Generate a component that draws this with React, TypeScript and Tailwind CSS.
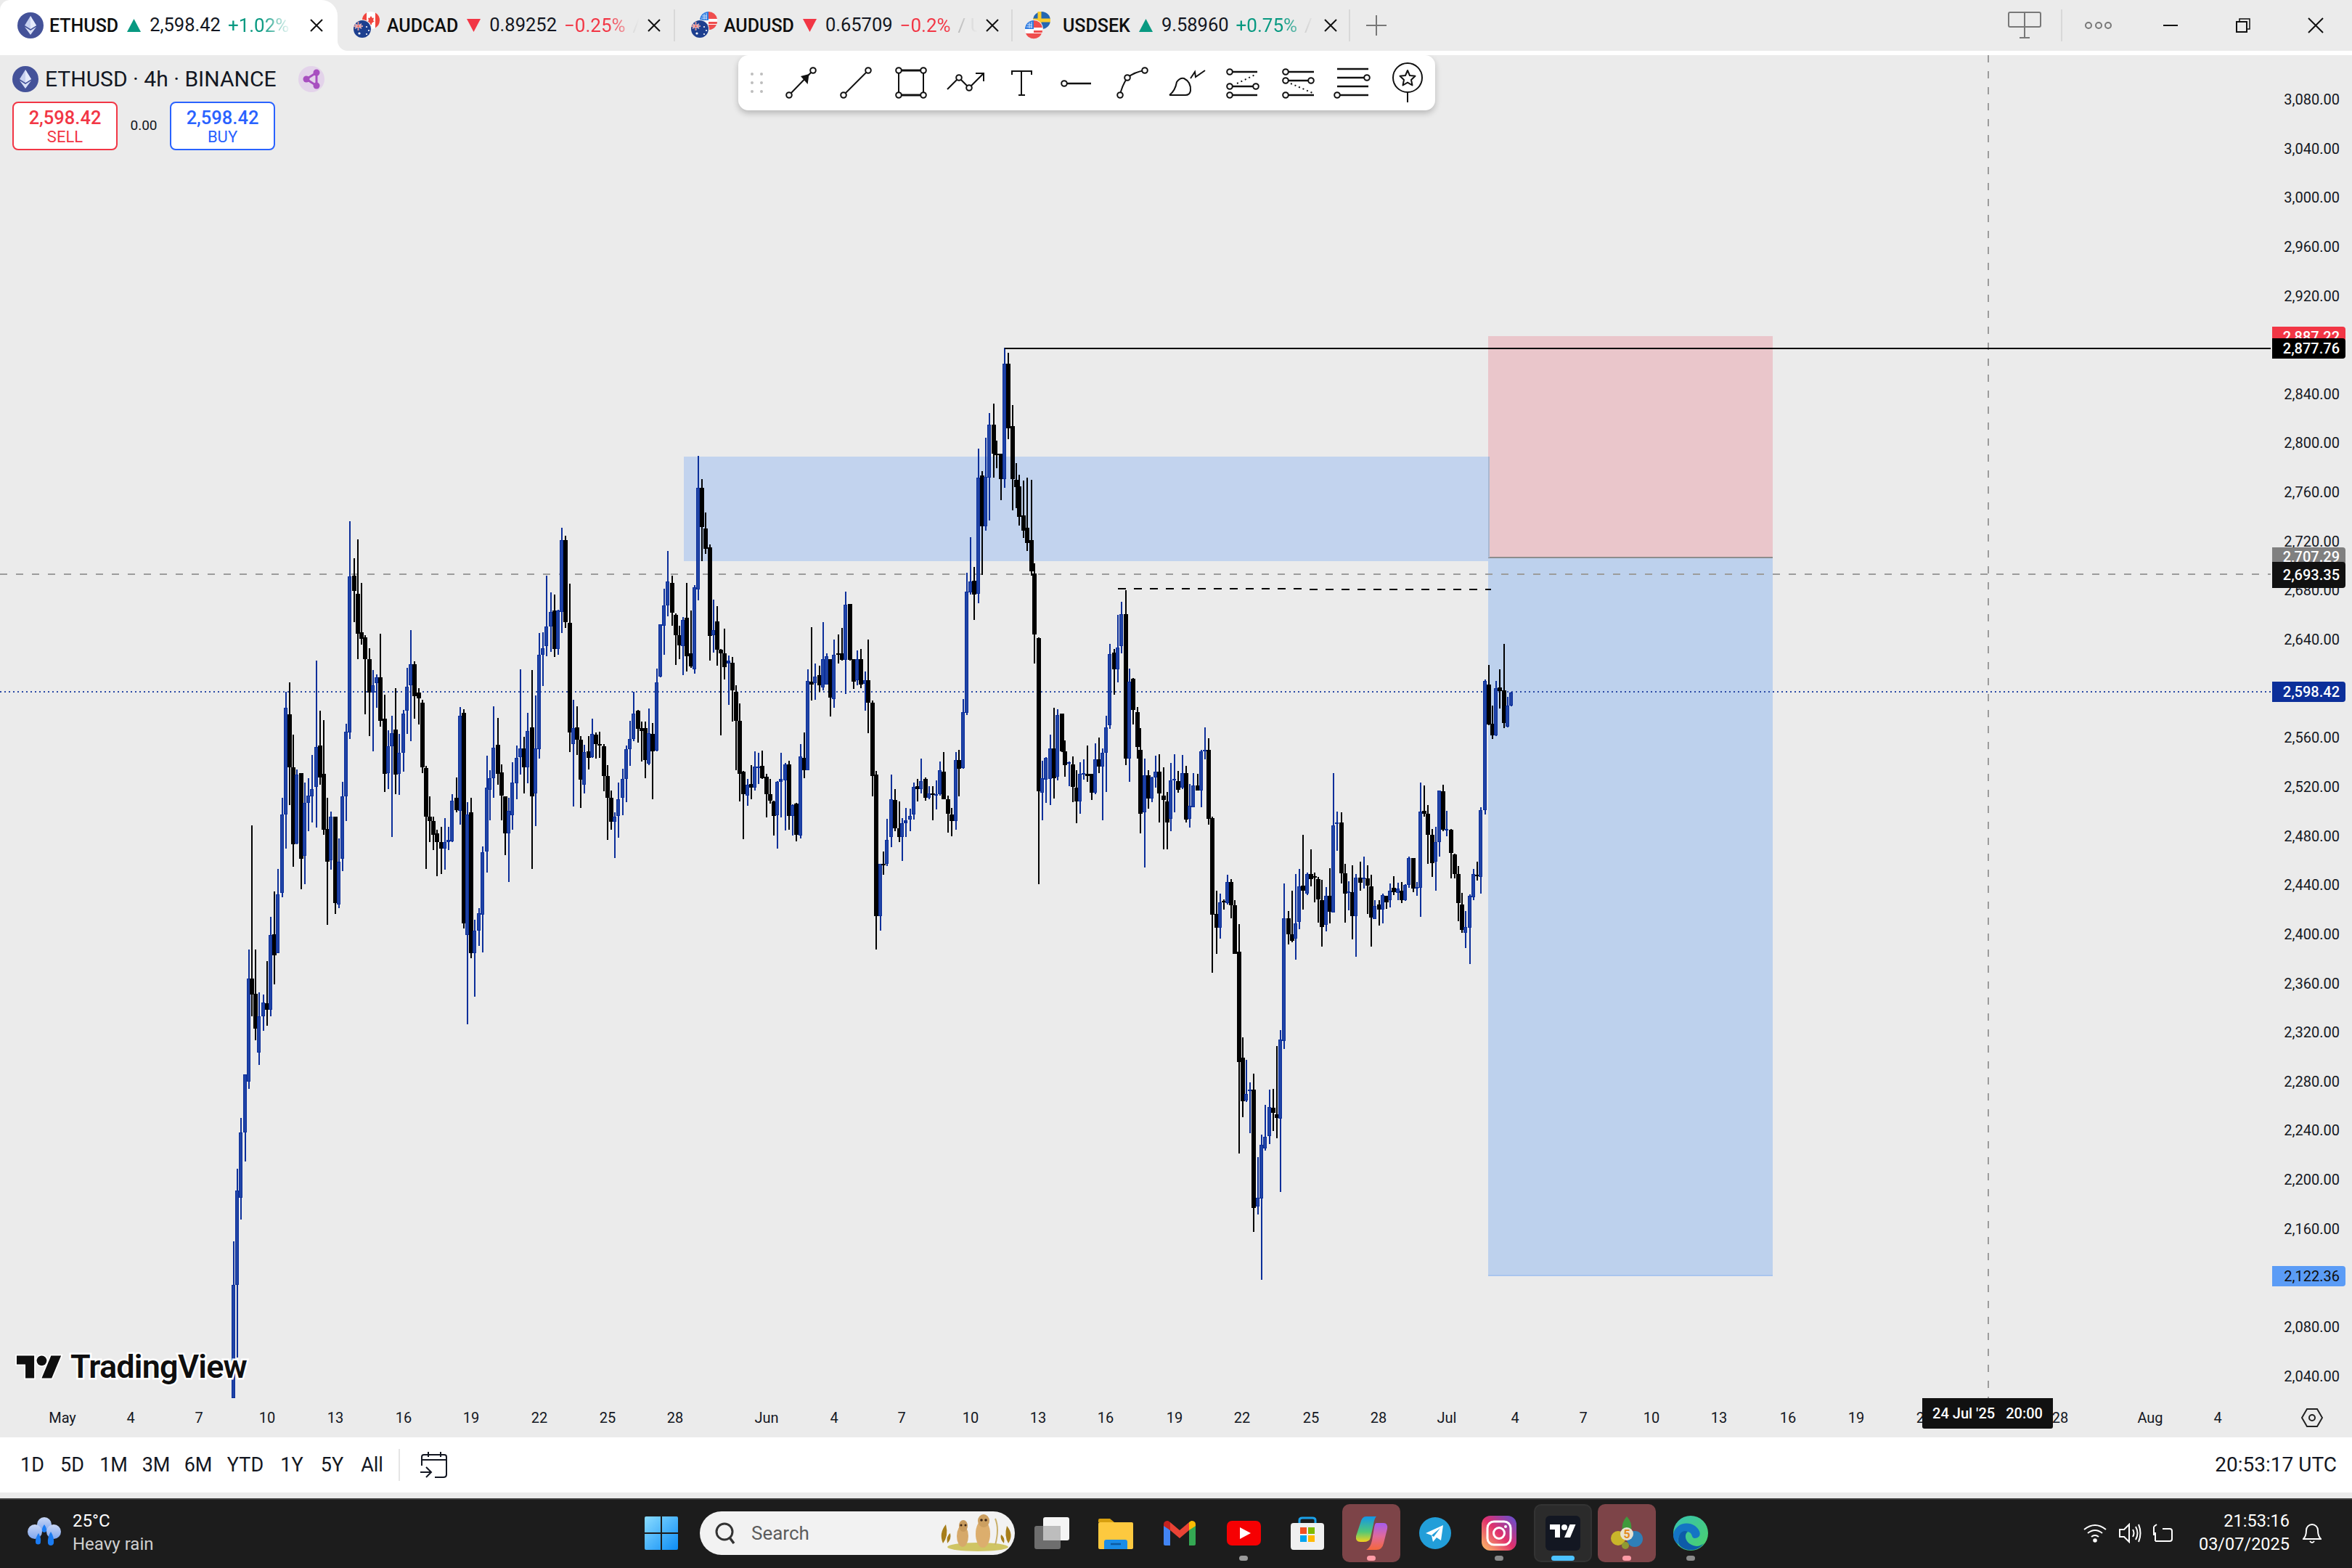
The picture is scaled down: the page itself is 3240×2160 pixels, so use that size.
import React from "react";

type Seg = { sx: number; sy: number; x0: number; y0: number; rows: string };

const SEGMENTS: Seg[] = [
  { sx: 1, sy: 1, x0: 0, y0: 0, rows: "b 322 1710 1770 1926 1926,b 327 1610 1640 1770 1870,b 332 1540 1560 1650 1680,b 338 1480 1480 1560 1600,b 343 1308 1348 1490 1500,b 962 628 672 812 827,k 967 660 672 726 773" },
  { sx: 2.24, sy: 3, x0: 300, y0: 900, rows: "k 105 712 1345 1410 1500,k 117 1225 1408 1550 1600,b 127 1400 1500 1650 1700,b 141 1410 1442 1500 1560,k 153 1272 1447 1472 1540,b 164 1090 1165 1472 1500,k 175 985 1162 1247 1367,b 187 892 995 1240 1240,b 199 598 665 990 1007,b 211 160 226 665 806,k 222 120 252 470 627,k 233 336 472 790 882,b 245 480 500 785 790,k 257 495 495 848 974,b 269 535 617 838 954,b 281 517 587 617 735,b 292 420 560 590 698,b 304 30 388 553 720,k 316 237 382 512 542,k 327 277 498 730 750,k 339 597 727 860 1122,b 350 655 676 856 893,k 362 676 676 1031 1077,b 374 766 862 1037 1052,b 386 532 592 848 900,b 397 292 325 590 692,b 748 223 258 650 707,k 760 232 247 1115 1137,b 771 616 667 1165 1533,k 782 598 658 1240 1260,b 793 1102 1145 1240 1418,b 806 1054 1075 1145 1208,b 817 798 822 1080 1235,b 830 423 555 818 905,b 840 483 517 563 690,b 851 220 391 517 597,k 864 267 378 497 543,k 876 460 493 587 690,k 887 590 590 745 833,b 898 597 650 745 945,b 910 450 535 668 730,b 922 380 433 538 603,b 935 67 392 430 500,k 945 345 393 470 578,b 957 247 320 472 537,k 969 68 307 590 890,b 981 175 393 580 713" },
  { sx: 1.96, sy: 2.8, x0: 300, y0: 680, rows: "b 357 105 320 920 945,k 368 250 317 375 495,k 378 175 387 540 637,k 388 345 535 560 582,k 398 545 553 637 850,k 409 595 637 768 935,b 419 680 740 768 993,b 429 697 707 730 825,k 439 540 707 875 900,k 450 775 868 1080 1150,b 460 913 973 1077 1140,b 470 857 925 975 1323,k 480 750 910 1083 1158,b 490 927 1000 1080 1162,b 501 835 847 1000 1072,b 511 672 745 838 927,b 521 527 658 740 955,k 532 647 658 780 868,k 542 750 767 790 890,k 552 795 805 1055 1077,k 562 1050 1057 1245 1447,k 572 1168 1245 1262 1343,k 582 1245 1262 1317 1375,k 592 1295 1310 1345 1475,k 603 1285 1345 1368 1467,b 613 1252 1345 1368 1450,b 623 1285 1335 1345 1375,b 633 1160 1183 1340 1345,k 644 1095 1173 1222 1228,b 869 538 622 985 1022,b 878 535 595 622 742,b 888 315 513 587 627,b 899 382 455 513 610,k 910 390 452 600 630,b 919 447 452 600 622,b 929 132 180 455 538,k 939 162 180 495 518,k 950 348 498 922 997,b 960 796 905 965 1207,k 970 820 902 948 1007,k 980 935 948 1102 1212,b 990 970 998 1122 1155,k 1001 935 995 1018 1063,b 1011 868 928 1015 1018,k 1021 922 930 965 1022,k 1031 918 965 968 1020,k 1042 965 975 1090 1148,k 1053 1047 1090 1172 1335,k 1063 1145 1172 1265 1295,b 1072 1230 1245 1265 1405,b 1082 1115 1178 1242 1327,b 1094 1062 1100 1172 1240,b 1104 972 985 1100 1190,b 1114 875 947 985 1050,b 1124 765 847 945 955,k 1134 835 838 908 960,k 1144 880 903 915 1032,k 1154 880 905 1027 1097,b 1164 830 925 1042 1047,k 1174 885 928 995 1178,b 1185 675 727 990 995,b 1195 505 505 705 708,b 1205 368 432 510 622,b 1215 222 340 432 472,k 1226 315 345 460 510,k 1237 462 468 545 660,k 1247 510 545 585 638,b 1257 477 488 587 700,k 1267 343 480 627 685,k 1277 452 617 665 672,b 1288 353 362 678 693,k 1318 73 135 212 232,k 1328 197 207 550 643,b 1339 410 525 545 612,k 1349 435 493 603 663,k 1359 598 603 615 932,k 1369 522 615 670 718,b 1379 625 645 655 815,k 1389 630 652 758 878,k 1399 740 765 875 1067,k 1410 810 877 1080 1187,k 1420 1070 1072 1160 1332,b 1430 1100 1123 1165 1203,k 1440 1048 1120 1135 1178,b 1450 995 1053 1135 1145,b 1460 1000 1052 1058 1120,k 1470 992 1050 1098 1100,k 1481 1082 1093 1160 1250,k 1491 1100 1160 1185 1195,k 1501 1185 1187 1242 1318,b 1511 1110 1112 1240 1368,b 1521 1000 1100 1112 1248,b 1532 1040 1043 1105 1298,k 1543 1030 1045 1242 1295,b 1553 1198 1200 1242 1320,k 1563 1192 1195 1315 1340" },
  { sx: 2.24, sy: 1.912, x0: 1100, y0: 450, rows: "b 6 1100 1132 1340 1348,k 18 1068 1135 1168 1190,b 30 903 933 1168 1168,k 41 792 935 942 985,b 52 887 922 938 982,k 65 892 917 945 962,b 77 778 875 950 958,b 87 860 868 942 942,k 99 875 875 977 1027,b 110 825 865 980 1003,k 123 810 860 865 888,k 134 793 860 878 880,b 146 698 733 878 968,k 158 730 730 878 880,k 170 875 875 935 955,b 181 853 875 932 945,k 193 848 875 942 952,b 205 908 932 940 1012,k 216 825 932 990 1070,k 228 985 990 1183 1237,k 240 1170 1180 1552 1640,b 252 1415 1415 1553 1590,k 262 1382 1415 1417 1443,b 274 1297 1352 1415 1420,b 286 1180 1245 1345 1370,k 298 1217 1247 1322 1328,k 311 1250 1322 1345 1358,b 320 1295 1307 1345 1408,b 332 1268 1300 1308 1345,b 345 1270 1288 1298 1328,b 357 1200 1212 1285 1298,k 368 1192 1210 1218 1250,b 379 1138 1197 1218 1230,k 391 1188 1192 1240 1248,b 403 1210 1230 1240 1245,k 415 1210 1230 1232 1300,b 426 1195 1232 1232 1272,b 437 1145 1168 1232 1235,k 449 1120 1172 1245 1245,k 461 1235 1245 1282 1332,k 473 1268 1285 1303 1342,b 485 1120 1142 1303 1325,k 496 1115 1142 1165 1238,b 508 980 1015 1163 1165,b 520 648 697 1017 1023,b 531 555 672 700 705,k 543 633 670 705 772,b 555 322 398 703 728,k 566 380 392 525 653,b 578 293 395 525 537,b 590 228 258 398 510,k 602 203 258 335 398,k 612 300 335 338 372,k 625 335 335 402 457,b 637 55 97 402 425,k 648 68 97 268 297,k 660 207 262 402 483,k 671 360 403 422 478,k 682 390 420 500 523,k 695 405 497 537 557,k 706 397 530 570 590,k 718 403 562 645 655,k 729 623 650 810 887,k 741 818 820 1223 1468,b 752 1143 1190 1228 1300,b 764 1133 1135 1193 1255,b 777 1075 1110 1192 1260,k 788 1003 1110 1190 1243,b 800 1007 1022 1185 1195,k 812 1020 1020 1118 1120,k 823 1090 1118 1155 1185,b 835 1145 1148 1150 1210,k 846 1132 1152 1213 1253,k 859 1168 1215 1250 1307,b 870 1148 1178 1250 1283,b 881 1140 1175 1178 1193,k 892 1103 1178 1183 1198,k 904 1178 1178 1228 1247,b 916 1098 1140 1228 1232,k 928 1082 1140 1158 1175,b 939 1110 1122 1158 1300,b 950 1025 1055 1122 1225,b 962 835 863 1050 1060,k 975 848 858 902 970,b 985 760 845 903 937,b 997 725 758 842 860,k 1010 695 758 1137 1155,b 1021 900 935 1137 1198,k 1033 925 928 1010 1048,k 1045 1002 1015 1107 1138,k 1056 1058 1115 1282 1335,b 1068 1138 1182 1280 1425,k 1080 1168 1182 1243 1270,b 1091 1185 1188 1243 1253,b 1102 1130 1172 1188 1215,k 1113 1127 1172 1230 1305,k 1126 1160 1235 1247 1377,k 1138 1225 1250 1305 1377,b 1149 1150 1195 1297 1328,b 1160 1127 1192 1195 1280,k 1172 1170 1197 1220 1228,b 1184 1128 1175 1215 1217,k 1196 1157 1175 1298 1305,b 1208 1205 1262 1297 1320,b 1219 1175 1208 1265 1265,k 1231 1178 1208 1222 1222,b 1243 1115 1118 1222 1265,b 1254 1055 1115 1118 1140,k 1265 1085 1115 1297 1312" },
  { sx: 3, sy: 1.704, x0: 1600, y0: 860, rows: "k 211 452 455 682 818,k 228 625 680 713 773,b 243 632 652 713 737,k 258 645 650 652 670,b 273 588 605 655 658,k 288 598 605 660 690,k 304 648 660 773 773,k 320 704 768 1028 1242,k 336 970 1017 1120 1157,b 351 1022 1102 1117 1122,b 365 1075 1093 1095 1195,k 382 1055 1092 1370 1427,b 398 1250 1347 1367 1385,b 414 1198 1222 1348 1538,b 430 1128 1203 1230 1235,b 446 1092 1133 1202 1220,k 462 1090 1135 1147 1190,k 477 990 1150 1158 1207,b 492 952 975 1160 1333,b 507 608 690 978 997,k 524 673 690 727 752,k 540 625 728 743 747,b 555 587 702 738 787,b 570 574 615 698 715,k 585 495 614 625 670,b 603 582 587 632 636,k 618 528 587 598 615,k 633 582 592 594 652,k 649 593 598 645 700,k 663 600 647 710 757,b 681 617 637 705 720,k 696 573 637 675 702,b 712 350 472 677 677,b 726 440 465 465 532,k 743 442 465 585 608,k 760 562 585 632 700,b 774 603 627 630 672,k 789 565 628 685 740,b 804 587 595 685 780,k 821 558 595 607 625,b 836 545 595 598 620,k 852 565 597 613 680,k 867 588 615 688 757,b 882 647 662 692 692,k 899 648 658 670 708,b 915 632 635 670 702,k 930 637 638 652 668,b 945 608 625 648 665,k 960 592 618 628 635,b 977 607 621 630 648,k 993 605 625 648 654,b 1008 610 612 648 650,b 1024 545 549 612 618,k 1040 549 549 620 628,b 1055 605 616 618 638,b 1070 372 440 618 687,k 1086 378 438 444 452,k 1101 425 444 495 562,k 1118 480 495 560 593,b 1134 476 512 558 625,b 1150 390 390 512 545,k 1164 376 392 482 485,b 1179 438 480 482 498,k 1196 480 482 536 597,k 1212 538 540 587 597,k 1227 568 587 655 697,k 1242 630 658 718 724,b 1258 673 710 725 760,b 1274 634 638 712 798,b 1290 574 587 640 648,k 1305 557 588 592 602,b 1320 430 437 593 632,b 1337 130 133 437 447,k 1353 96 142 235 237,k 1368 190 234 260 270,b 1384 133 150 260 262,k 1398 105 148 156 198,k 1415 46 155 232 243,b 1432 170 190 240 242,b 1447 158 160 190 192" },
];

const TOP = 76;
const candles = SEGMENTS.flatMap((s) =>
  s.rows.split(",").map((r) => {
    const [c, zx, hi, top, bot, lo] = r.split(" ");
    const Y = (v: string) => Math.round(s.y0 + Number(v) / s.sy) - TOP;
    return { blue: c === "b", x: Math.round(s.x0 + Number(zx) / s.sx), hi: Y(hi), top: Y(top), bot: Y(bot), lo: Y(lo) };
  })
);

const PRICES = ["3,080.00","3,040.00","3,000.00","2,960.00","2,920.00","","2,840.00","2,800.00","2,760.00","2,720.00","2,680.00","2,640.00","","2,560.00","2,520.00","2,480.00","2,440.00","2,400.00","2,360.00","2,320.00","2,280.00","2,240.00","2,200.00","2,160.00","","2,080.00","2,040.00"];

const DATES: [string, number][] = [["May",86],["4",180],["7",274],["10",368],["13",462],["16",556],["19",649],["22",743],["25",837],["28",930],["Jun",1056],["4",1149],["7",1242],["10",1337],["13",1430],["16",1523],["19",1618],["22",1711],["25",1806],["28",1899],["Jul",1993],["4",2087],["7",2181],["10",2275],["13",2368],["16",2463],["19",2557],["22",2651],["28",2838],["Aug",2962],["4",3055]];

function Chart() {
  return (
    <svg className="absolute left-0 top-0" width={3240} height={1904} shapeRendering="crispEdges">
      <rect x={942} y={553} width={1112} height={144} fill="#c2d3ee" />
      <rect x={2050} y={387} width={392} height={305} fill="#eac6cb" />
      <rect x={2050} y={692} width={392} height={990} fill="#bdd1ed" />
      <line x1={2050} x2={2442} y1={692} y2={692} stroke="#8d8d8d" strokeWidth={2} />
      <line x1={2050} x2={2442} y1={1681} y2={1681} stroke="#a9c5ee" strokeWidth={2} />
      <line x1={2051} x2={2051} y1={553} y2={692} stroke="#aab8d0" strokeWidth={2} />
      <line x1={2739} x2={2739} y1={0} y2={1850} stroke="#9c9c9c" strokeWidth={2} strokeDasharray="10 12" />
      <line x1={0} x2={3128} y1={715} y2={715} stroke="#9c9c9c" strokeWidth={2} strokeDasharray="10 12" />
      <line x1={0} x2={3128} y1={877} y2={877} stroke="#2a49a5" strokeWidth={2} strokeDasharray="2 4" />
      {candles.map((c, i) => (
        <g key={i} fill={c.blue ? "#0c2f9a" : "#000000"}>
          <rect x={c.x - 1} y={c.hi} width={2} height={Math.max(1, c.lo - c.hi)} />
          <rect x={c.x - 3} y={c.top} width={c.blue ? 5 : 6} height={Math.max(2, c.bot - c.top)} />
          {c.blue && c.bot - c.top > 4 && <rect x={c.x - 2} y={c.top + 1} width={3} height={c.bot - c.top - 2} fill="#1f43a6" />}
        </g>
      ))}
      <line x1={1384} x2={3128} y1={404} y2={404} stroke="#000" strokeWidth={2} />
      <line x1={1540} x2={2054} y1={735} y2={736} stroke="#000" strokeWidth={2} strokeDasharray="11 11" />
    </svg>
  );
}

function EthLogo({ size }: { size: number }) {
  return (
    <svg width={size} height={size} viewBox="0 0 36 36">
      <circle cx="18" cy="18" r="18" fill="#445299" />
      <path d="M18 5l-8 13 8 5 8-5z" fill="#c8d1f0" />
      <path d="M18 5v18l8-5z" fill="#e6ebfb" />
      <path d="M10 20l8 11 8-11-8 5z" fill="#d9e0f6" />
    </svg>
  );
}

function AU({ x, y }: { x: number; y: number }) {
  return (
    <g transform={`translate(${x} ${y})`}>
      <circle r="13" fill="#ebebeb" />
      <circle r="12" fill="#1d3f8f" />
      <path d="M-10-7L-1-1M-1-7L-10-1M-5.5-10V2M-12-4H1" stroke="#fff" strokeWidth="1.6" />
      <path d="M-10-7L-1-1M-1-7L-10-1M-5.5-10V2M-12-4H1" stroke="#e2453f" strokeWidth=".7" />
      <circle cx="-4" cy="6" r="1.6" fill="#fff" />
      <circle cx="6" cy="-3" r="1.1" fill="#fff" />
      <circle cx="6" cy="7" r="1.1" fill="#fff" />
      <circle cx="9" cy="2" r="1.1" fill="#fff" />
    </g>
  );
}
function CA({ x, y }: { x: number; y: number }) {
  return (
    <g transform={`translate(${x} ${y})`}>
      <circle r="12" fill="#fff" />
      <path d="M6-10.4A12 12 0 0 1 6 10.4z" fill="#f0453e" />
      <path d="M-6-10.4A12 12 0 0 0-6 10.4z" fill="#f0453e" />
      <path d="M0-6l2 3 2-.5-1 4 2 .5-4 3v2h-2v-2l-4-3 2-.5-1-4 2 .5z" fill="#f0453e" />
    </g>
  );
}
function US({ x, y, top }: { x: number; y: number; top?: boolean }) {
  return (
    <g transform={`translate(${x} ${y})`}>
      {!top && <circle r="13" fill="#ebebeb" />}
      <circle r="12" fill="#fff" />
      <path d="M-12 0A12 12 0 0 1 0-12V0z" fill="#2f7be0" />
      <path d="M0-12A12 12 0 0 1 12-2H0zM0 2H12A12 12 0 0 1 11.5 5H0zM-11 6H11A12 12 0 0 1-11 6z" fill="#ef4d4d" />
      <path d="M-9-6h7M-10-3h8M-6-9v8M-3-10v9" stroke="#cfe3fb" strokeWidth="1" />
    </g>
  );
}
function SE({ x, y }: { x: number; y: number }) {
  return (
    <g transform={`translate(${x} ${y})`}>
      <circle r="12" fill="#2467b2" />
      <path d="M-12 0H12M-3-12V12" stroke="#f9cc2e" strokeWidth="5" />
    </g>
  );
}

function Flags({ kind }: { kind: string }) {
  return (
    <svg width="40" height="46" viewBox="0 0 40 46" className="shrink-0">
      {kind === "audcad" && (<><CA x={26} y={16} /><AU x={14} y={28} /></>)}
      {kind === "audusd" && (<><US x={26} y={16} top /><AU x={14} y={28} /></>)}
      {kind === "usdsek" && (<><SE x={26} y={16} /><US x={15} y={28} /></>)}
    </svg>
  );
}

function Tri({ up }: { up: boolean }) {
  return (
    <svg width="19" height="18" viewBox="0 0 19 18" className="shrink-0">
      <path d={up ? "M9.5 0L19 18H0z" : "M0 0H19L9.5 18z"} fill={up ? "#089981" : "#f23645"} />
    </svg>
  );
}

function CloseX() {
  return (
    <svg width="18" height="18" viewBox="0 0 18 18" className="shrink-0">
      <path d="M1 1L17 17M17 1L1 17" stroke="#111" strokeWidth="2" />
    </svg>
  );
}

function Tab({ w, icon, name, up, price, pct, ghost, sep, nameMl, tabMr }: { w: string; icon: React.ReactNode; name: string; up: boolean; price: string; pct: string; ghost: string; sep?: boolean; nameMl: string; tabMr: string }) {
  return (
    <div className={`relative flex items-center h-[70px] shrink-0 ${w}`}>
      {icon}
      <span className={`text-[25px] font-medium text-[#0f0f0f] leading-none ${nameMl}`}>{name}</span>
      <span className="ml-[12px] flex"><Tri up={up} /></span>
      <span className="ml-[12px] text-[25.5px] text-[#131722] leading-none">{price}</span>
      <span className={`ml-[10px] flex-1 min-w-0 overflow-hidden whitespace-nowrap text-[26px] leading-none [mask-image:linear-gradient(to_right,#000_55%,transparent_95%)] ${up ? "text-[#089981]" : "text-[#f23645]"}`}>{pct}<span className="ml-[10px] text-[#999]">{ghost}</span></span>
      <span className={`ml-[6px] flex ${tabMr}`}><CloseX /></span>
      {sep && <span className="absolute right-0 top-[13px] h-[44px] w-[2px] bg-[#d8d8d8]" />}
    </div>
  );
}

function Header() {
  return (
    <div className="flex h-[70px] bg-white shrink-0">
      <div className="w-[465px] h-[70px] bg-[#ebebeb] shrink-0">
        <div className="flex items-center h-[70px] bg-white rounded-tl-[14px] rounded-tr-[22px] pl-[24px]">
          <EthLogo size={36} />
          <span className="ml-[8px] text-[25px] font-medium text-[#0f0f0f] leading-none">ETHUSD</span>
          <span className="ml-[12px] flex"><Tri up /></span>
          <span className="ml-[12px] text-[25.5px] text-[#131722] leading-none">2,598.42</span>
          <span className="ml-[10px] w-[92px] whitespace-nowrap text-[26px] leading-none text-[#089981] [mask-image:linear-gradient(to_right,#000_50%,transparent_95%)]">+1.02%</span>
          <span className="ml-[21px] flex"><CloseX /></span>
        </div>
      </div>
      <div className="flex-1 flex items-center bg-[#ebebeb] rounded-bl-[14px]">
        <Tab w="w-[465px] pl-[20px]" icon={<Flags kind="audcad" />} name="AUDCAD" up={false} price="0.89252" pct="−0.25%" ghost="/" nameMl="ml-[8px]" tabMr="mr-[20px]" sep />
        <Tab w="w-[465px] pl-[20px]" icon={<Flags kind="audusd" />} name="AUDUSD" up={false} price="0.65709" pct="−0.2%" ghost="/ U" nameMl="ml-[7px]" tabMr="mr-[19px]" sep />
        <Tab w="w-[465px] pl-[14px]" icon={<Flags kind="usdsek" />} name="USDSEK" up price="9.58960" pct="+0.75%" ghost="/ " nameMl="ml-[15px]" tabMr="mr-[18px]" sep />
        <svg width="28" height="28" viewBox="0 0 28 28" className="ml-[22px] shrink-0">
          <path d="M14 0V28M0 14H28" stroke="#787878" strokeWidth="2" />
        </svg>
        <div className="flex-1" />
        <svg width="46" height="38" viewBox="0 0 46 38" className="shrink-0">
          <rect x="1" y="1" width="44" height="20" rx="2" fill="none" stroke="#787878" strokeWidth="2" />
          <path d="M23 1V36M16 36H30" fill="none" stroke="#787878" strokeWidth="2" />
        </svg>
        <span className="ml-[27px] w-[2px] h-[44px] bg-[#d8d8d8]" />
        <svg width="40" height="12" viewBox="0 0 40 12" className="ml-[30px] shrink-0">
          <circle cx="6" cy="6" r="4" fill="none" stroke="#787878" strokeWidth="2" />
          <circle cx="20" cy="6" r="4" fill="none" stroke="#787878" strokeWidth="2" />
          <circle cx="33" cy="6" r="4" fill="none" stroke="#787878" strokeWidth="2" />
        </svg>
        <svg width="20" height="2" viewBox="0 0 20 2" className="ml-[69px] shrink-0"><path d="M0 1H20" stroke="#111" strokeWidth="2" /></svg>
        <svg width="20" height="20" viewBox="0 0 20 20" className="ml-[80px] shrink-0">
          <rect x="1" y="5" width="14" height="14" fill="none" stroke="#111" strokeWidth="2" />
          <path d="M5 5V1H19V15H15" fill="none" stroke="#111" strokeWidth="1.5" />
        </svg>
        <svg width="22" height="22" viewBox="0 0 22 22" className="ml-[79px] mr-[39px] shrink-0"><path d="M1 1L21 21M21 1L1 21" stroke="#111" strokeWidth="2" /></svg>
      </div>
    </div>
  );
}

const H = ({ cx, cy }: { cx: number; cy: number }) => <circle cx={cx} cy={cy} r="3.8" fill="#fff" stroke="#111" strokeWidth="2" />;

const TOOL_ICONS: React.ReactNode[] = [
  <><path d="M14 48L47 14" stroke="#111" strokeWidth="2" /><path d="M41.5 19L30 22L39.6 33z" fill="#111" /><H cx={14} cy={48} /><H cx={47} cy={14} /></>,
  <><path d="M13 48L47 14" stroke="#111" strokeWidth="2" /><H cx={13} cy={48} /><H cx={47} cy={14} /></>,
  <><path d="M13 14H47M13 48H47" stroke="#111" strokeWidth="3" /><path d="M13 14V48M47 14V48" stroke="#111" strokeWidth="2" /><H cx={13} cy={14} /><H cx={47} cy={14} /><H cx={13} cy={48} /><H cx={47} cy={48} /></>,
  <><path d="M4 40L20 24L34 38L54 18M43 18H54V29" fill="none" stroke="#111" strokeWidth="2" /><H cx={20} cy={24} /><H cx={34} cy={38} /></>,
  <><path d="M17 20V15H44V20M30 15V48M26 48H35" fill="none" stroke="#111" strokeWidth="2" /></>,
  <><path d="M13 32H50" stroke="#111" strokeWidth="2.5" /><H cx={13} cy={32} /></>,
  <><path d="M14 48Q16 36 24 24Q34 16 48 14" fill="none" stroke="#111" strokeWidth="2" /><H cx={14} cy={48} /><H cx={24} cy={24} /><H cx={48} cy={14} /></>,
  <><path d="M6 48Q14 42 16 30Q20 24 26 25Q36 30 35 42Q34 48 28 48H6" fill="none" stroke="#111" strokeWidth="2" /><path d="M35 25L41 16L42 23L55 14" fill="none" stroke="#111" strokeWidth="2" /></>,
  <><path d="M13 16H51M13 36H49M13 48H51" stroke="#111" strokeWidth="2.5" /><path d="M23 32L50 19" stroke="#111" strokeWidth="2" strokeDasharray="2 4" /><H cx={13} cy={16} /><H cx={13} cy={36} /><H cx={49} cy={36} /><H cx={13} cy={48} /></>,
  <><path d="M14 16H53M14 28H49M14 48H53" stroke="#111" strokeWidth="2.5" /><path d="M21 32L51 45" stroke="#111" strokeWidth="2" strokeDasharray="2 4" /><H cx={14} cy={16} /><H cx={14} cy={28} /><H cx={49} cy={28} /><H cx={14} cy={48} /></>,
  <><path d="M9 12H52M9 24H50M9 36H52M9 48H52" stroke="#111" strokeWidth="2.5" /><H cx={50} cy={24} /><H cx={9} cy={48} /></>,
  <><circle cx="30" cy="24" r="20" fill="none" stroke="#111" strokeWidth="2" /><path d="M30 44V58" stroke="#111" strokeWidth="2" /><path d="M30 14L33 21L40.5 21.8L35 27L36.5 34.5L30 30.6L23.5 34.5L25 27L19.5 21.8L27 21z" fill="none" stroke="#111" strokeWidth="2" strokeLinejoin="round" /></>,
];

function Toolbar() {
  return (
    <div className="absolute left-[1017px] top-0 w-[960px] h-[76px] bg-white rounded-[14px] shadow-[0_4px_8px_rgba(0,0,0,0.22)] flex items-center pl-[17px]">
      <div className="grid grid-cols-2 gap-x-[10px] gap-y-[8px] w-[16px] mr-[23px]">
        {[0, 1, 2, 3, 4, 5].map((i) => <span key={i} className="w-[4px] h-[4px] rounded-full bg-[#bdbdbd]" />)}
      </div>
      <div className="flex gap-[16px] mt-[-2px]">
        {TOOL_ICONS.map((ic, i) => (
          <svg key={i} width="60" height="60" viewBox="0 0 60 60" className="shrink-0" fill="none">{ic}</svg>
        ))}
      </div>
    </div>
  );
}

function Legend() {
  return (
    <div className="absolute left-[17px] top-[15px] flex flex-col">
      <div className="flex items-center h-[36px]">
        <EthLogo size={36} />
        <span className="ml-[9px] text-[30px] text-[#131722] leading-none whitespace-nowrap">ETHUSD · 4h · BINANCE</span>
        <span className="ml-[30px] w-[36px] h-[36px] rounded-full bg-[#e3d3ea] flex items-center justify-center">
          <svg width="24" height="28" viewBox="0 0 24 28">
            <path d="M19 5L5 14L19 23Z" fill="none" stroke="#a84fc0" strokeWidth="3" />
            <circle cx="19" cy="5" r="4.5" fill="#a84fc0" /><circle cx="5" cy="14" r="4.5" fill="#a84fc0" /><circle cx="19" cy="23" r="4.5" fill="#a84fc0" />
          </svg>
        </span>
      </div>
      <div className="flex items-center mt-[13px]">
        <div className="w-[145px] h-[67px] rounded-[8px] border-2 border-[#f23645] bg-white flex flex-col items-center justify-center text-[#f23645] pt-[2px]">
          <span className="text-[25.5px] font-medium leading-[28px]">2,598.42</span>
          <span className="text-[22px] leading-[26px]">SELL</span>
        </div>
        <span className="w-[72px] text-center text-[19px] text-[#131722]">0.00</span>
        <div className="w-[145px] h-[67px] rounded-[8px] border-2 border-[#2962ff] bg-white flex flex-col items-center justify-center text-[#2962ff] pt-[2px]">
          <span className="text-[25.5px] font-medium leading-[28px]">2,598.42</span>
          <span className="text-[22px] leading-[26px]">BUY</span>
        </div>
      </div>
    </div>
  );
}

function PriceTag({ top, h, bg, text, cls }: { top: string; h: string; bg: string; text: string; cls?: string }) {
  return (
    <div className={`absolute left-[3130px] w-[101px] ${top} ${h} ${bg} rounded-r-[4px] flex items-center justify-end pr-[8px] text-[20px] font-medium text-white leading-none ${cls ?? ""}`}>{text}</div>
  );
}

function PriceAxis() {
  return (
    <>
      <div className="absolute right-[17px] top-[49px] h-[1783px] flex flex-col justify-between items-end text-[20px] leading-[24px] text-[#131722]">
        {PRICES.map((p, i) => <span key={i} className="h-[24px]">{p}</span>)}
      </div>
      <PriceTag top="top-[374px]" h="h-[20px]" bg="bg-[#f23645]" text="2,887.22" cls="items-start pt-[4px] overflow-hidden" />
      <PriceTag top="top-[390px]" h="h-[28px]" bg="bg-black" text="2,877.76" />
      <PriceTag top="top-[678px]" h="h-[24px]" bg="bg-[#808080]" text="2,707.29" cls="items-start pt-[3px]" />
      <PriceTag top="top-[698px]" h="h-[36px]" bg="bg-[#111111]" text="2,693.35" />
      <PriceTag top="top-[863px]" h="h-[28px]" bg="bg-[#0c2f9a]" text="2,598.42" />
      <PriceTag top="top-[1668px]" h="h-[28px]" bg="bg-[#5b9cf6]" text="2,122.36" cls="!text-[#0f0f0f] !font-normal" />
    </>
  );
}

function TimeAxis() {
  return (
    <>
      {DATES.map(([t, x], i) => (
        <span key={i} className="absolute top-[1865px] -translate-x-1/2 text-[20px] leading-[24px] text-[#131722]" style={{ left: x }}>{t}</span>
      ))}
      <div className="absolute left-[2648px] top-[1850px] w-[180px] h-[42px] bg-[#111111] rounded-b-[3px] flex items-center justify-center gap-[15px] text-[20px] font-medium text-white whitespace-nowrap">
        <span>24 Jul '25</span><span>20:00</span>
      </div>
      <svg width="30" height="26" viewBox="0 0 30 26" className="absolute left-[3170px] top-[1864px]">
        <path d="M8 1H22L29 13L22 25H8L1 13Z" fill="none" stroke="#222" strokeWidth="2" />
        <circle cx="15" cy="13" r="4" fill="none" stroke="#222" strokeWidth="2" />
      </svg>
    </>
  );
}

function Watermark() {
  return (
    <div className="absolute left-[23px] top-[1784px] flex items-center">
      <svg width="62" height="32" viewBox="0 0 36 18.5" className="overflow-visible">
        <g transform="translate(0 -3.8)" stroke="#fff" strokeWidth="2" paintOrder="stroke">
          <path d="M14 22H7V11H0V4h14v18zM28 22h-8l7.5-18h8L28 22z" fill="#0f0f0f" />
          <circle cx="20" cy="8" r="4" fill="#0f0f0f" />
        </g>
      </svg>
      <span className="ml-[12px] text-[45px] font-semibold leading-none tracking-[-0.8px] text-[#0f0f0f] [-webkit-text-stroke:5px_white] [paint-order:stroke_fill]">TradingView</span>
    </div>
  );
}

function RangeBar() {
  const items = [["1D","w-[55px]"],["5D","w-[55px]"],["1M","w-[59px]"],["3M","w-[58px]"],["6M","w-[58px]"],["YTD","w-[72px]"],["1Y","w-[56px]"],["5Y","w-[55px]"],["All","w-[55px]"]];
  return (
    <div className="flex items-center h-[76px] bg-white shrink-0 pl-[17px] pr-[21px]">
      {items.map(([t, w]) => (
        <span key={t} className={`text-center text-[27px] leading-none text-[#131722] ${w}`}>{t}</span>
      ))}
      <span className="ml-[9px] w-[2px] h-[44px] bg-[#e5e5e5]" />
      <svg width="40" height="38" viewBox="0 0 40 38" className="ml-[27px] shrink-0">
        <path d="M3 20V8Q3 5 6 5H34Q37 5 37 8V32Q37 36 33 36H21M3 12H37M12 1V8M29 1V8" fill="none" stroke="#131722" strokeWidth="2" />
        <path d="M1 29H15M9 22L16 29L9 36" fill="none" stroke="#131722" strokeWidth="2" />
      </svg>
      <span className="ml-auto text-[28px] text-[#131722] leading-none">20:53:17 UTC</span>
    </div>
  );
}

function TaskItem({ children, tile, dot, active }: { children: React.ReactNode; tile?: boolean; dot?: string; active?: boolean }) {
  return (
    <div className="relative w-[88px] h-[80px] flex items-center justify-center shrink-0">
      {tile && <div className="absolute inset-x-[4px] inset-y-0 rounded-[10px] bg-[#7d4448]" />}
      {active && <div className="absolute inset-x-[4px] inset-y-0 rounded-[10px] bg-[#2b2b2b] border-2 border-[#333]" />}
      <div className="relative flex">{children}</div>
      {dot && <span className={`absolute bottom-[2px] left-1/2 -translate-x-1/2 h-[7px] rounded-full ${dot}`} />}
    </div>
  );
}

function Taskbar() {
  return (
    <div className="flex items-center h-[96px] bg-[#1c1c1c] border-t-2 border-[#3a3a3a] shrink-0 pb-[2px] text-[24px]">
      <div className="w-[867px] flex items-center pl-[37px] shrink-0">
        <svg width="48" height="44" viewBox="0 0 48 44">
          <defs><linearGradient id="w1" x1="0" y1="0" x2="0" y2="1"><stop offset="0" stopColor="#c8d6f5" /><stop offset="1" stopColor="#7fa6ee" /></linearGradient></defs>
          <circle cx="24" cy="10" r="10" fill="url(#w1)" /><circle cx="11" cy="20" r="10" fill="url(#w1)" /><circle cx="37" cy="20" r="10" fill="url(#w1)" />
          <path d="M24 10q4 6 3 9a3.2 3.2 0 0 1-6 0q-1-3 3-9zM16 22q4 7 3 12a3.5 3.5 0 0 1-7 0q-.5-5 4-12zM33 20q5 8 4 16a4.2 4.2 0 0 1-8 0q-1-8 4-16z" fill="#1b7cf2" />
        </svg>
        <div className="ml-[15px] flex flex-col leading-[32px] mt-[-2px]">
          <span className="text-white">25°C</span>
          <span className="text-[#cfcfcf]">Heavy rain</span>
        </div>
      </div>
      <TaskItem>
        <svg width="46" height="46" viewBox="0 0 46 46">
          <defs><linearGradient id="wn" x1="0" y1="0" x2="1" y2="1"><stop offset="0" stopColor="#8adcff" /><stop offset="1" stopColor="#0c8cf6" /></linearGradient></defs>
          <path d="M0 2Q0 0 2 0H22V22H0zM24 0H44Q46 0 46 2V22H24zM0 24H22V46H2Q0 46 0 44zM24 24H46V44Q46 46 44 46H24z" fill="url(#wn)" />
        </svg>
      </TaskItem>
      <div className="ml-[9px] w-[434px] h-[60px] rounded-full bg-[#f2f2f2] flex items-center pl-[21px] shrink-0 overflow-hidden">
        <svg width="28" height="30" viewBox="0 0 28 30"><circle cx="13" cy="13" r="11" fill="none" stroke="#333" strokeWidth="3" /><path d="M20 21L26 29" stroke="#333" strokeWidth="3.5" /></svg>
        <span className="ml-[22px] text-[26px] text-[#5c5c5c] leading-none">Search</span>
        <svg width="104" height="52" viewBox="0 0 104 52" className="ml-auto mr-[1px]">
          <ellipse cx="54" cy="45" rx="42" ry="6" fill="#cfc564" />
          <path d="M6 40Q0 26 10 14Q14 30 6 40zM12 40Q10 30 16 26Q18 34 12 40zM96 40Q104 28 94 16Q90 30 96 40zM90 40Q92 32 86 28Q84 34 90 40z" fill="#a67e1b" />
          <path d="M78 42Q84 20 78 6" fill="none" stroke="#c9b06a" strokeWidth="2" />
          <ellipse cx="33" cy="30" rx="8" ry="15" fill="#d6a96a" /><ellipse cx="34" cy="16" rx="6" ry="8" fill="#c79a5d" />
          <ellipse cx="61" cy="27" rx="10" ry="19" fill="#dcae6d" /><ellipse cx="62" cy="9" rx="8" ry="9" fill="#cc9f60" />
          <circle cx="31" cy="15" r="1.5" fill="#3a2415" /><circle cx="37" cy="15" r="1.5" fill="#3a2415" /><circle cx="59" cy="8" r="1.8" fill="#3a2415" /><circle cx="65" cy="8" r="1.8" fill="#3a2415" />
        </svg>
      </div>
      <div className="ml-[7px] flex">
        <TaskItem>
          <svg width="48" height="44" viewBox="0 0 48 44"><rect x="0" y="12" width="36" height="32" rx="3" fill="#6e6e6e" /><rect x="12" y="0" width="36" height="32" rx="3" fill="#f4f4f4" /><rect x="12" y="12" width="24" height="20" fill="#bdbdbd" /></svg>
        </TaskItem>
        <TaskItem>
          <svg width="48" height="44" viewBox="0 0 48 44"><path d="M0 4Q0 2 2 2H16L22 7H0z" fill="#d8a010" /><rect x="0" y="7" width="48" height="37" rx="2" fill="#fdc93f" /><path d="M8 44V34Q8 31 11 31H37Q40 31 40 34V44z" fill="#1a8ce6" /><path d="M17 37H31" stroke="#0c5aa0" strokeWidth="2.5" /></svg>
        </TaskItem>
        <TaskItem>
          <svg width="44" height="34" viewBox="0 0 44 34"><path d="M0 5V32Q0 34 2 34H9V13z" fill="#4285f4" /><path d="M35 13V34H42Q44 34 44 32V5z" fill="#34a853" /><path d="M9 13L22 24L35 13V2L22 13L9 2z" fill="#ea4335" /><path d="M0 5Q0 0 6 0L9 2V13L0 7z" fill="#c5221f" /><path d="M44 5Q44 0 38 0L35 2V13L44 7z" fill="#fbbc04" /></svg>
        </TaskItem>
        <TaskItem dot="w-[12px] bg-[#9a9a9a]">
          <svg width="47" height="34" viewBox="0 0 47 34"><rect width="47" height="34" rx="7" fill="#f60002" /><path d="M18 9L33 17L18 25z" fill="#fff" /></svg>
        </TaskItem>
        <TaskItem>
          <svg width="46" height="46" viewBox="0 0 46 46"><path d="M12 10V5Q12 2 16 2H30Q34 2 34 5V10" fill="none" stroke="#1aa0e8" strokeWidth="3" /><rect x="0" y="9" width="46" height="37" rx="4" fill="#f0f0f0" /><rect x="13" y="15" width="9" height="9" fill="#f25022" /><rect x="24" y="15" width="9" height="9" fill="#7fba00" /><rect x="13" y="26" width="9" height="9" fill="#00a4ef" /><rect x="24" y="26" width="9" height="9" fill="#ffb900" /></svg>
        </TaskItem>
        <TaskItem tile dot="w-[12px] bg-[#ff9aa5]">
          <svg width="46" height="48" viewBox="0 0 46 48">
            <defs><linearGradient id="cp1" x1="0" y1="0" x2="0" y2="1"><stop offset="0" stopColor="#1296e8" /><stop offset=".6" stopColor="#50c878" /><stop offset="1" stopColor="#f3d21c" /></linearGradient><linearGradient id="cp2" x1="0" y1="0" x2="0" y2="1"><stop offset="0" stopColor="#a55cf0" /><stop offset=".5" stopColor="#e06a9a" /><stop offset="1" stopColor="#f5673a" /></linearGradient></defs>
            <path d="M16 1H30Q27 4 26 12L22 30Q21 36 12 36H8Q1 36 2 28L8 10Q10 1 16 1z" fill="url(#cp1)" />
            <path d="M30 10H40Q46 10 45 18L40 38Q38 47 30 47H16Q22 44 24 34L27 16Q28 10 30 10z" fill="url(#cp2)" />
          </svg>
        </TaskItem>
        <TaskItem>
          <svg width="44" height="44" viewBox="0 0 44 44"><circle cx="22" cy="22" r="22" fill="#229ed9" /><path d="M33 11L9 22L17 25L19 34L24 28L30 32z" fill="#fff" /><path d="M17 25L29 15L20 27z" fill="#229ed9" /></svg>
        </TaskItem>
        <TaskItem dot="w-[12px] bg-[#8a8a8a]">
          <svg width="48" height="48" viewBox="0 0 48 48">
            <defs><linearGradient id="ig" x1="0" y1="1" x2="1" y2="0"><stop offset="0" stopColor="#fdc468" /><stop offset=".5" stopColor="#e1306c" /><stop offset="1" stopColor="#5b51d8" /></linearGradient></defs>
            <rect width="48" height="48" rx="12" fill="url(#ig)" /><rect x="8" y="8" width="32" height="32" rx="9" fill="none" stroke="#fff" strokeWidth="3" /><circle cx="24" cy="24" r="7.5" fill="none" stroke="#fff" strokeWidth="3" /><circle cx="33" cy="15" r="2" fill="#fff" />
          </svg>
        </TaskItem>
        <TaskItem active dot="w-[32px] bg-[#4cc2ff]">
          <svg width="48" height="48" viewBox="0 0 48 48"><rect width="48" height="48" rx="6" fill="#131722" /><g transform="translate(6 11)"><path d="M14 22H7V11H0V4h14v18zM28 22h-8l7.5-18h8L28 22z" fill="#fff" transform="translate(0 -3)" /><circle cx="20" cy="5" r="4" fill="#fff" /></g></svg>
        </TaskItem>
        <TaskItem tile dot="w-[12px] bg-[#ff9aa5]">
          <svg width="44" height="46" viewBox="0 0 44 46"><path d="M22 0Q30 8 28 20H16Q14 8 22 0z" fill="#3f9a3c" /><circle cx="10" cy="30" r="10" fill="#c9b52a" /><circle cx="33" cy="31" r="11" fill="#2e7fb8" /><circle cx="22" cy="24" r="9" fill="#e9e2d0" /><circle cx="20" cy="40" r="5" fill="#8f9a33" /><text x="22" y="30" textAnchor="middle" fontSize="16" fontWeight="700" fill="#e38a1e">5</text></svg>
        </TaskItem>
        <TaskItem dot="w-[12px] bg-[#8a8a8a]">
          <svg width="48" height="48" viewBox="0 0 48 48">
            <defs><linearGradient id="ed" x1="0" y1="0" x2="1" y2="1"><stop offset="0" stopColor="#37c3b0" /><stop offset="1" stopColor="#4bd06a" /></linearGradient></defs>
            <circle cx="24" cy="24" r="24" fill="url(#ed)" /><path d="M0 26C2 12 18 6 30 14C38 20 40 30 30 31C24 31 28 24 20 22C10 20 4 30 8 40C2 36 0 32 0 26z" fill="#1474c4" /><path d="M8 40C4 28 12 18 20 22C14 26 16 40 32 42C36 42 40 40 42 38C34 50 16 50 8 40z" fill="#0d5ba8" />
          </svg>
        </TaskItem>
      </div>
      <div className="flex-1 flex items-center justify-end pr-[42px]">
        <svg width="32" height="26" viewBox="0 0 32 26" fill="none" stroke="#fff" strokeWidth="2"><path d="M1 8Q16-4 31 8M6 13Q16 5 26 13M11 18Q16 14 21 18" /><circle cx="16" cy="23" r="1.8" fill="#fff" /></svg>
        <svg width="32" height="28" viewBox="0 0 32 28" fill="none" stroke="#fff" strokeWidth="2" className="ml-[16px]"><path d="M2 9H8L15 2V26L8 19H2zM20 9Q23 14 20 19M24 5Q29 14 24 23M28 2Q33 14 28 26" /></svg>
        <svg width="30" height="26" viewBox="0 0 30 26" fill="none" stroke="#fff" strokeWidth="2" className="ml-[15px]"><path d="M4 24H24Q27 24 27 21V10Q27 7 24 7H14M2 16V4M2 4L6 1M4 12V24" /></svg>
        <div className="ml-[22px] w-[137px] flex flex-col items-end leading-[32px] text-white text-[23.5px] mt-[-2px]">
          <span>21:53:16</span>
          <span>03/07/2025</span>
        </div>
        <svg width="26" height="30" viewBox="0 0 26 30" fill="none" stroke="#fff" strokeWidth="2" className="ml-[18px]"><path d="M1 23H25Q21 19 21 11A8 8 0 0 0 5 11Q5 19 1 23zM10 26Q13 30 16 26" /></svg>
      </div>
    </div>
  );
}

export default function App() {
  return (
    <div className="w-[3240px] h-[2160px] flex flex-col bg-[#ebebeb] overflow-hidden [font-family:Roboto,sans-serif]">
      <Header />
      <div className="h-[6px] bg-white shrink-0" />
      <div className="relative h-[1904px] shrink-0 overflow-hidden">
        <Chart />
        <PriceAxis />
        <TimeAxis />
        <Legend />
        <Toolbar />
        <Watermark />
      </div>
      <RangeBar />
      <div className="h-[8px] shrink-0" />
      <Taskbar />
    </div>
  );
}
